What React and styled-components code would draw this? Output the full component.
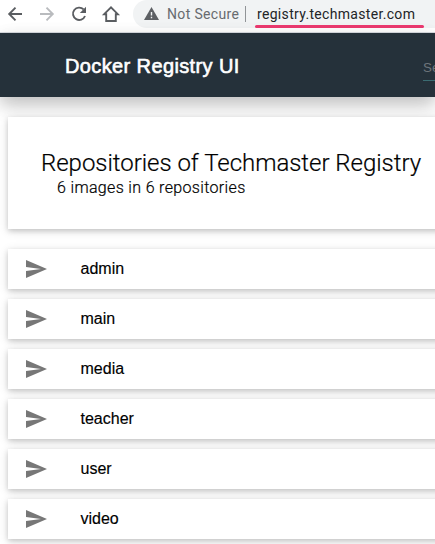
import React from "react";
import styled, { createGlobalStyle } from "styled-components";

const GlobalStyle = createGlobalStyle`
  * { box-sizing: border-box; }
  html, body { margin: 0; background: #fff; overflow: hidden; }
`;

const Page = styled.div`
  width: 100%;
  height: 544px;
  overflow: hidden;
  background: #fff;
  color: #000;
  font-family: "Liberation Sans", Arial, sans-serif;
`;

const BrowserBar = styled.div`
  height: 33px;
  display: flex;
  background: #fff;
  border-bottom: 1px solid #d9dce1;
`;

const NavIcons = styled.div`
  display: flex;
  gap: 12px;
  padding: 4px 0 0 5px;
  width: 133px;
  flex: none;
`;

const NavIcon = styled.svg`
  width: 20px;
  height: 20px;
  flex: none;
  fill: none;
  stroke: ${(p) => (p.$muted ? "#b9bbbe" : "#5a5d61")};
  stroke-width: 1.9;
`;

const AddressBar = styled.div`
  flex: 1;
  height: 28px;
  display: flex;
  align-items: flex-start;
  padding-left: 11px;
  background: #f1f3f4;
  border-radius: 14px 0 0 14px;
  font-family: Roboto, sans-serif;
  font-size: 14px;
  line-height: 28px;
  white-space: nowrap;
`;

const WarningIcon = styled.svg`
  width: 15px;
  height: 14px;
  margin-top: 7px;
  flex: none;
`;

const Security = styled.span`
  width: 78px;
  margin-left: 8px;
  color: #686b6f;
  letter-spacing: 0.34px;
`;

const Divider = styled.span`
  width: 1px;
  height: 16px;
  margin-top: 6px;
  background: #919497;
`;

const Address = styled.span`
  position: relative;
  width: 170px;
  height: 28px;
  margin-left: 9px;
  padding-left: 2px;
  color: #222427;
  letter-spacing: 0.32px;

  &::after {
    content: "";
    position: absolute;
    left: 0;
    top: 25px;
    width: 169px;
    height: 3px;
    border-radius: 1.5px;
    background: #ec3a70;
  }
`;

const Header = styled.header`
  position: relative;
  height: 64px;
  display: flex;
  justify-content: space-between;
  padding-left: 65px;
  background: #25313a;
  box-shadow: 0 8px 17px rgba(0, 0, 0, 0.2), 0 6px 20px rgba(0, 0, 0, 0.07);
`;

const Brand = styled.div`
  font-size: 20px;
  line-height: 66px;
  color: #fff;
  -webkit-text-stroke: 0.6px #fff;
  letter-spacing: 0.38px;
  white-space: nowrap;
`;

const Search = styled.div`
  width: 12px;
  height: 26px;
  margin-top: 22px;
  overflow: hidden;
  border-bottom: 1px solid #3b6c72;
  color: #6d757a;
  font-size: 13.33px;
  line-height: 25px;
  white-space: nowrap;
`;

const Main = styled.main`
  display: flex;
  flex-direction: column;
  padding: 20px 0 0 8px;
  width: 480px;
`;

const Card = styled.section`
  position: relative;
  background: #fff;
  box-shadow: 0 2px 5px rgba(0, 0, 0, 0.16), 0 2px 10px rgba(0, 0, 0, 0.12);
`;

const Summary = styled(Card)`
  height: 112px;
  padding: 32px 0 0 33px;
  font-family: Roboto, sans-serif;
  font-weight: 300;
`;

const Title = styled.h1`
  margin: 0;
  font-size: 24px;
  line-height: 28px;
  font-weight: 300;
  letter-spacing: -0.03px;
  white-space: nowrap;
  -webkit-text-stroke: 0.2px #000;
`;

const Subtitle = styled.p`
  margin: 0 0 0 16px;
  font-size: 16px;
  line-height: 21px;
  letter-spacing: 0.34px;
  -webkit-text-stroke: 0.2px #000;
`;

const RepositoryList = styled.div`
  display: flex;
  flex-direction: column;
  gap: 10px;
  margin-top: 20px;
`;

const Repository = styled(Card)`
  height: 40px;
  display: flex;
  align-items: center;
  padding-left: 16px;
  font-size: 16px;
  -webkit-text-stroke: 0.15px #000;
`;

const SendIcon = styled.svg`
  width: 24px;
  height: 24px;
  margin-right: 32.5px;
  fill: #777;
`;

const repositories = ["admin", "main", "media", "teacher", "user", "video"];

export default function App() {
  return (
    <Page>
      <GlobalStyle />
      <BrowserBar>
        <NavIcons>
          <NavIcon viewBox="0 0 20 20"><path d="M17 10H4.3M10.5 3.7 4.2 10l6.3 6.3" /></NavIcon>
          <NavIcon viewBox="0 0 20 20" $muted><path d="M3 10h12.7M9.5 3.7 15.8 10l-6.3 6.3" /></NavIcon>
          <NavIcon viewBox="0 0 20 20">
            <path d="M14.6 5.4A6.2 6.2 0 1 0 16 12" />
            <path d="M17 2.8V9h-6.2z" fill="#5a5d61" stroke="none" />
          </NavIcon>
          <NavIcon viewBox="0 0 20 20"><path d="M3.2 10.2 10 3.4l6.8 6.8h-2V17H5.2v-6.8z" /></NavIcon>
        </NavIcons>
        <AddressBar>
          <WarningIcon viewBox="0 0 15 14">
            <path d="M7.5 0 15 13H0z" fill="#5d6064" />
            <path d="M7.5 5v3.5M7.5 9.7v1.6" stroke="#f1f3f4" strokeWidth="1.4" />
          </WarningIcon>
          <Security>Not Secure</Security>
          <Divider />
          <Address>registry.techmaster.com</Address>
        </AddressBar>
      </BrowserBar>
      <Header>
        <Brand>Docker Registry UI</Brand>
        <Search>Search</Search>
      </Header>
      <Main>
        <Summary>
          <Title>Repositories of Techmaster Registry</Title>
          <Subtitle>6 images in 6 repositories</Subtitle>
        </Summary>
        <RepositoryList>
          {repositories.map((name) => (
            <Repository key={name}>
              <SendIcon viewBox="0 0 24 24">
                <path d="M2.01 21 23 12 2.01 3 2 10l15 2-15 2z" />
              </SendIcon>
              {name}
            </Repository>
          ))}
        </RepositoryList>
      </Main>
    </Page>
  );
}
